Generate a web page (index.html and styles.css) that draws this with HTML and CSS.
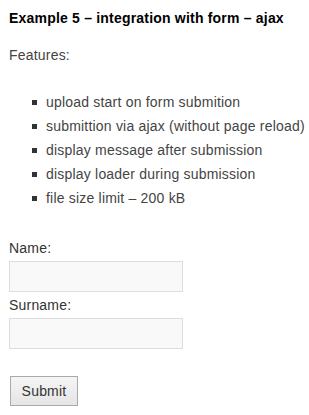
FILE: index.html
```html
<!DOCTYPE html>
<html lang="en">
  <head>
    <meta charset="UTF-8" />
    <meta name="viewport" content="width=device-width,initial-scale=1.0" />
    <title>Example 5</title>
    <link rel="stylesheet" href="styles.css">
  </head>
  <body>
    <div class="page">
      <h3 class="title">Example 5 – integration with form – ajax</h3>
      <p class="intro">Features:</p>
      <ul class="features">
        <li>upload start on form submition</li>
        <li>submittion via ajax (without page reload)</li>
        <li>display message after submission</li>
        <li>display loader during submission</li>
        <li>file size limit – 200 kB</li>
      </ul>
      <form class="demo-form" onsubmit="return false;">
        <label class="field-label" for="name">Name:</label>
        <input class="field-input" type="text" id="name" name="name" />
        <label class="field-label" for="surname">Surname:</label>
        <input class="field-input" type="text" id="surname" name="surname" />
        <input class="submit-button" type="submit" value="Submit" />
      </form>
    </div>
  </body>
</html>
```

FILE: styles.css
```css
body {
  margin: 0;
  font-family: "Liberation Sans", Arial, sans-serif;
  color: #444;
  background: #fff;
  letter-spacing: 0.2px;
  overflow: hidden;
}
.page {
  padding: 10px 9px;
}
.title {
  margin: 0;
  font-size: 14px;
  line-height: 16px;
  font-weight: bold;
  color: #000;
  white-space: nowrap;
}
.intro {
  margin: 20px 0 0 0;
  font-size: 14px;
  line-height: 18px;
}
.features {
  list-style: none;
  margin: 26px 0 0 0;
  padding-left: 23px;
  font-size: 14px;
  line-height: 24px;
}
.features li {
  white-space: nowrap;
}
.features li::before {
  content: "";
  display: inline-block;
  width: 5px;
  height: 5px;
  background: #333;
  margin-right: 9px;
  vertical-align: 2px;
}
.demo-form {
  margin-top: 29px;
}
.field-label {
  display: block;
  font-size: 14px;
  line-height: 18px;
  color: #333;
}
.field-input {
  display: block;
  box-sizing: border-box;
  width: 174px;
  height: 31px;
  margin: 4px 0 4px 0;
  border: 1px solid #ddd;
  background: #f9f9f9;
  font-family: inherit;
  font-size: 14px;
}
.submit-button {
  display: block;
  box-sizing: border-box;
  width: 68px;
  height: 30px;
  margin: 27px 0 0 1px;
  border: 1px solid #aaa;
  background: linear-gradient(#f5f5f5, #e5e5e5);
  font-family: inherit;
  font-size: 14px;
  letter-spacing: 0.2px;
  color: #333;
}
```
